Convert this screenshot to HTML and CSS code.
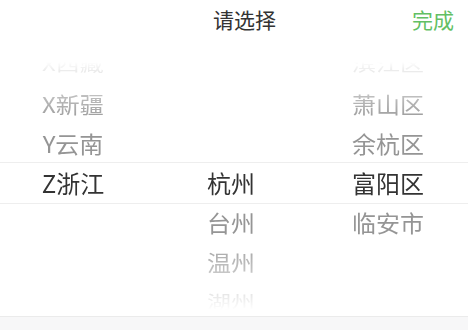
FILE: index.html
```html
<!DOCTYPE html>
<html lang="zh-CN">
<head>
<meta charset="utf-8">
<title>请选择</title>
<link rel="stylesheet" href="styles.css">
</head>
<body>
<div class="sheet">
  <header class="bar">
    <span class="side"></span>
    <h1 class="title">请选择</h1>
    <span class="side done">完成</span>
  </header>
  <div class="picker">
    <div class="band"></div>
    <ul class="col">
      <li class="d3">X西藏</li>
      <li class="d2">X新疆</li>
      <li class="d1">Y云南</li>
      <li class="sel">Z浙江</li>
      <li></li>
      <li></li>
      <li></li>
    </ul>
    <ul class="col">
      <li></li>
      <li></li>
      <li></li>
      <li class="sel">杭州</li>
      <li class="d1">台州</li>
      <li class="d2">温州</li>
      <li class="d3">湖州</li>
    </ul>
    <ul class="col">
      <li class="d3">滨江区</li>
      <li class="d2">萧山区</li>
      <li class="d1">余杭区</li>
      <li class="sel">富阳区</li>
      <li class="d1">临安市</li>
      <li></li>
      <li></li>
    </ul>
  </div>
  <div class="foot"></div>
</div>
</body>
</html>
```

FILE: styles.css
```css
* { box-sizing: border-box; }
html, body {
  margin: 0;
  padding: 0;
  background: #ffffff;
}
body {
  font-family: "Noto Sans CJK SC", "Noto Sans", sans-serif;
  width: 468px;
  height: 330px;
  overflow: hidden;
}
.sheet {
  display: flex;
  flex-direction: column;
  width: 468px;
  height: 330px;
}
.bar {
  display: grid;
  grid-template-columns: 1fr auto 1fr;
  align-items: center;
  height: 44px;
  padding: 0 14px 6px 14px;
}
.title {
  margin: 0 0 0 21px;
  font-size: 21px;
  font-weight: 400;
  color: #333333;
  line-height: 38px;
}
.done {
  justify-self: end;
  font-size: 21px;
  color: #62bf64;
  line-height: 38px;
}
.picker {
  position: relative;
  height: 273px;
  display: grid;
  grid-template-columns: 146px 170px 144px;
  overflow: hidden;
  border-bottom: 1px solid #ebebeb;
}
.band {
  position: absolute;
  left: 0;
  right: 0;
  top: 118px;
  height: 42px;
  border-top: 1px solid #eeeeee;
  border-bottom: 1px solid #eeeeee;
  pointer-events: none;
}
.col {
  list-style: none;
  margin: 0;
  padding: 0;
  -webkit-mask-image: linear-gradient(to bottom, transparent 0, transparent 18px, rgba(0,0,0,0.25) 26px, #000 72px, #000 198px, rgba(0,0,0,0.3) 252px, transparent 266px);
  mask-image: linear-gradient(to bottom, transparent 0, transparent 18px, rgba(0,0,0,0.25) 26px, #000 72px, #000 198px, rgba(0,0,0,0.3) 252px, transparent 266px);
}
.col li {
  height: 39.5px;
  line-height: 39.5px;
  text-align: center;
  font-size: 24px;
  color: #999999;
  white-space: nowrap;
}
.col li.sel {
  color: #333333;
}
.col li.d1 {
  color: #959595;
  transform: scaleY(0.96);
}
.col li.d2 {
  color: #a0a0a0;
  transform: scaleY(0.9);
}
.col li.d3 {
  color: #b5b5b5;
  transform: scaleY(0.7);
}
.foot {
  flex: 1;
  background: #f7f7f8;
}
```
